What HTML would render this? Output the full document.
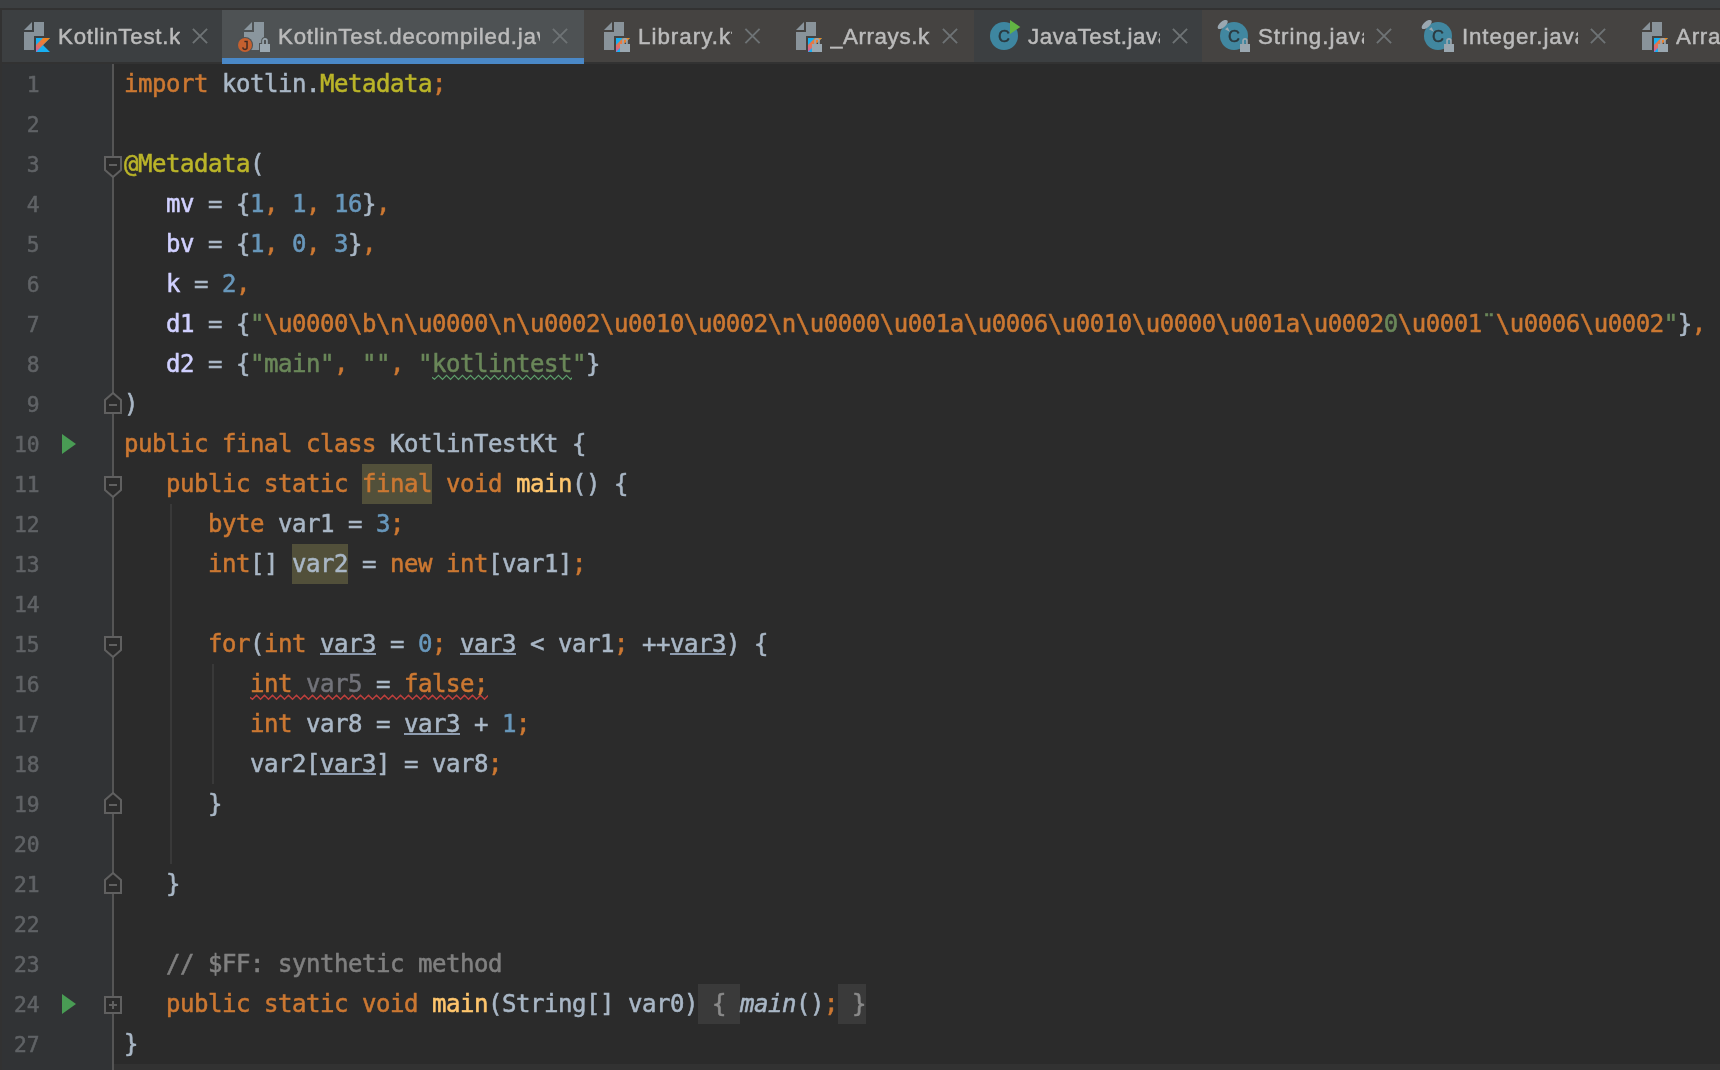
<!DOCTYPE html>
<html lang="en"><head><meta charset="utf-8"><title>KotlinTest.decompiled.java</title>
<style>
*{box-sizing:border-box}
html,body{margin:0;padding:0;overflow:hidden}
body{width:1720px;height:1070px;overflow:hidden;background:#2b2b2b;position:relative;font-family:"Liberation Sans",sans-serif}
#top{position:absolute;left:0;top:0;width:1720px;height:8px;background:#3c3f41}
#topline{position:absolute;left:0;top:8px;width:1720px;height:2px;background:#323232}
#tabs{position:absolute;left:0;top:0;width:1720px;height:64px}
.tb{position:absolute;top:10px;height:52px}
.sel{background:#4e5254;height:54px;border-bottom:6px solid #4a88c7}
#tabline{position:absolute;left:0;top:62px;width:1720px;height:2px;background:#323232}
#leftedge{position:absolute;left:0;top:8px;width:2px;height:1062px;background:#323232}
#icons{position:absolute;left:0;top:0;will-change:transform}
.tt{position:absolute;top:10.5px;height:52px;line-height:52px;font-size:22.3px;letter-spacing:0.76px;-webkit-text-stroke:0.5px #bbbbbb;color:#bbbbbb;white-space:nowrap;overflow:hidden;will-change:transform}
.cl{fill:none;stroke:#6e7375;stroke-width:1.9}
#gutter{position:absolute;left:2px;top:64px;width:110px;height:1006px;background:#313335}
#gsep{position:absolute;left:112px;top:64px;width:2px;height:1006px;background:#555555}
#caret{position:absolute;left:114px;top:1064px;width:1606px;height:6px;background:#323232}
#nums{-webkit-text-stroke-width:0.5px;will-change:transform;position:absolute;left:0;top:64px;width:39.3px;text-align:right;font-family:"DejaVu Sans Mono","Liberation Mono",monospace;font-size:21.3px;letter-spacing:-0.2px;color:#606366;line-height:40px}
#nums div{height:40px;padding-top:1px}
#code{-webkit-text-stroke-width:0.55px;position:absolute;left:124px;top:64px;font-family:"DejaVu Sans Mono","Liberation Mono",monospace;font-size:24px;letter-spacing:-0.4531px;line-height:40px;color:#a9b7c6;white-space:pre;will-change:transform}
.ln{height:40px}
.k{color:#cc7832}.a{color:#bbb529}.n{color:#6897bb}.s{color:#6a8759}.an{color:#d0d0ff}.f{color:#ffc66d}.c{color:#808080}.g{color:#72737a}
.i{font-style:italic}
.w{background:#52503a;padding:6px 0 6px}
.fold{background:#3a3a3a;color:#8a8a8a;padding:6px 0 6px}
.ul{position:absolute;height:2px;background:#8e9cb0}
.wv{position:absolute;fill:none;stroke-linejoin:miter}
.fm{position:absolute;left:104px;fill:#2b2b2b;stroke:#606060;stroke-width:2}
.run{position:absolute;left:62px;fill:#499c54}
.guide{position:absolute;width:2px;background:#393939}
</style></head>
<body>
<svg width="0" height="0" style="position:absolute"><defs><linearGradient id="kg" x1="0" y1="1" x2="1" y2="0"><stop offset="0" stop-color="#c757bc"/><stop offset="0.3" stop-color="#e0725c"/><stop offset="1" stop-color="#f88909"/></linearGradient></defs></svg>
<div id="top"></div><div id="topline"></div>
<div id="tabline"></div>
<div id="tabs"><div class="tb" style="left:2px;width:220px;background:#3c3f41"></div><div class="tb" style="left:584px;width:390px;background:#454341"></div><div class="tb" style="left:974px;width:228px;background:#3c3f41"></div><div class="tb" style="left:1202px;width:518px;background:#454341"></div><div class="tb sel" style="left:222px;width:362px"></div><svg id="icons" width="1720" height="64" viewBox="0 0 1720 64"><path d="M24 30l8-8v8z" fill="#9aa7b0" fill-opacity=".8"/><path d="M34 22h10v14h-10v14h-10v-18h10z" fill="#9aa7b0" fill-opacity=".8"/><path d="M36 38h14l-7 7l7 7h-14z" fill="#18b0f2"/><path d="M43 38h7l-14 14v-7z" fill="url(#kg)"/><path d="M244 30l8-8v8z" fill="#9aa7b0" fill-opacity=".8"/><path d="M254 22h10v28h-20v-18h10z" fill="#9aa7b0" fill-opacity=".8"/><circle cx="245" cy="45" r="8.1" fill="#4e5254"/><circle cx="245" cy="45" r="7" fill="#c4602f"/><text x="245.4" y="49.7" text-anchor="middle" font-family="Liberation Sans, sans-serif" font-size="13.3" fill="#231f20" fill-opacity=".75" stroke="#231f20" stroke-opacity=".75" stroke-width=".4">J</text><path d="M263.05 45V40.8a1.95 1.95 0 0 1 3.9 0V45" fill="none" stroke="#4e5254" stroke-width="3.7"/><rect x="259" y="43" width="12" height="10" fill="#4e5254"/><path d="M263.05 45V40.8a1.95 1.95 0 0 1 3.9 0V45" fill="none" stroke="#9aa7b0" stroke-width="1.7"/><rect x="260" y="44" width="10" height="8" fill="#9aa7b0"/><path d="M604 30l8-8v8z" fill="#9aa7b0" fill-opacity=".8"/><path d="M614 22h10v14h-10v14h-10v-18h10z" fill="#9aa7b0" fill-opacity=".8"/><path d="M616 38h14l-7 7l7 7h-14z" fill="#18b0f2"/><path d="M623 38h7l-14 14v-7z" fill="url(#kg)"/><path d="M623.05 45V40.8a1.95 1.95 0 0 1 3.9 0V45" fill="none" stroke="#9aa7b0" stroke-width="1.7"/><rect x="620" y="44" width="10" height="8" fill="#9aa7b0"/><path d="M796 30l8-8v8z" fill="#9aa7b0" fill-opacity=".8"/><path d="M806 22h10v14h-10v14h-10v-18h10z" fill="#9aa7b0" fill-opacity=".8"/><path d="M808 38h14l-7 7l7 7h-14z" fill="#18b0f2"/><path d="M815 38h7l-14 14v-7z" fill="url(#kg)"/><path d="M815.05 45V40.8a1.95 1.95 0 0 1 3.9 0V45" fill="none" stroke="#9aa7b0" stroke-width="1.7"/><rect x="812" y="44" width="10" height="8" fill="#9aa7b0"/><circle cx="1004" cy="36" r="14" fill="#40b6e0" fill-opacity=".6"/><text x="1003.9" y="41.9" text-anchor="middle" font-family="Liberation Sans, sans-serif" font-size="16.5" fill="#231f20" fill-opacity=".7" stroke="#231f20" stroke-opacity=".7" stroke-width=".5">C</text><path d="M1010 20l10.3 7l-10.3 7z" fill="#62b543"/><circle cx="1234" cy="36" r="14" fill="#40b6e0" fill-opacity=".6"/><text x="1233.9" y="41.9" text-anchor="middle" font-family="Liberation Sans, sans-serif" font-size="16.5" fill="#231f20" fill-opacity=".7" stroke="#231f20" stroke-opacity=".7" stroke-width=".5">C</text><ellipse cx="1222.7" cy="24.5" rx="6.2" ry="2.9" transform="rotate(-40.7 1222.7 24.5)" fill="#9aa7b0"/><path d="M1225.0 29.3L1227.6 27.2L1229.9 31.7z" fill="#9aa7b0"/><path d="M1243.05 45V40.8a1.95 1.95 0 0 1 3.9 0V45" fill="none" stroke="#9aa7b0" stroke-width="1.7"/><rect x="1240" y="44" width="10" height="8" fill="#9aa7b0"/><circle cx="1438" cy="36" r="14" fill="#40b6e0" fill-opacity=".6"/><text x="1437.9" y="41.9" text-anchor="middle" font-family="Liberation Sans, sans-serif" font-size="16.5" fill="#231f20" fill-opacity=".7" stroke="#231f20" stroke-opacity=".7" stroke-width=".5">C</text><ellipse cx="1426.7" cy="24.5" rx="6.2" ry="2.9" transform="rotate(-40.7 1426.7 24.5)" fill="#9aa7b0"/><path d="M1429.0 29.3L1431.6 27.2L1433.9 31.7z" fill="#9aa7b0"/><path d="M1447.05 45V40.8a1.95 1.95 0 0 1 3.9 0V45" fill="none" stroke="#9aa7b0" stroke-width="1.7"/><rect x="1444" y="44" width="10" height="8" fill="#9aa7b0"/><path d="M1642 30l8-8v8z" fill="#9aa7b0" fill-opacity=".8"/><path d="M1652 22h10v14h-10v14h-10v-18h10z" fill="#9aa7b0" fill-opacity=".8"/><path d="M1654 38h14l-7 7l7 7h-14z" fill="#18b0f2"/><path d="M1661 38h7l-14 14v-7z" fill="url(#kg)"/><path d="M1661.05 45V40.8a1.95 1.95 0 0 1 3.9 0V45" fill="none" stroke="#9aa7b0" stroke-width="1.7"/><rect x="1658" y="44" width="10" height="8" fill="#9aa7b0"/><g class="cl"><path d="M192.9 28.9l14.2 14.2m0-14.2l-14.2 14.2"/><path d="M552.9 28.9l14.2 14.2m0-14.2l-14.2 14.2"/><path d="M745.4 28.9l14.2 14.2m0-14.2l-14.2 14.2"/><path d="M942.9 28.9l14.2 14.2m0-14.2l-14.2 14.2"/><path d="M1172.9 28.9l14.2 14.2m0-14.2l-14.2 14.2"/><path d="M1376.9 28.9l14.2 14.2m0-14.2l-14.2 14.2"/><path d="M1590.9 28.9l14.2 14.2m0-14.2l-14.2 14.2"/></g></svg><span class="tt" style="left:58px;width:122.0px">KotlinTest.kt</span><span class="tt" style="left:278px;width:262.0px">KotlinTest.decompiled.java</span><span class="tt" style="left:638px;width:94.3px;letter-spacing:1.03px">Library.kt</span><span class="tt" style="left:830px;width:100.0px;letter-spacing:0.62px">_Arrays.kt</span><span class="tt" style="left:1028px;width:132.0px;letter-spacing:0.59px">JavaTest.java</span><span class="tt" style="left:1258px;width:106.2px;letter-spacing:1.00px">String.java</span><span class="tt" style="left:1462px;width:116.0px;letter-spacing:0.88px">Integer.java</span><span class="tt" style="left:1676px;width:44.0px">Arrays.kt</span></div>
<div id="gutter"></div><div id="gsep"></div><div id="leftedge"></div>
<div id="caret"></div>
<div class="guide" style="left:170px;top:504px;height:360px"></div>
<div class="guide" style="left:212px;top:664px;height:120px"></div>
<div id="nums"><div>1</div><div>2</div><div>3</div><div>4</div><div>5</div><div>6</div><div>7</div><div>8</div><div>9</div><div>10</div><div>11</div><div>12</div><div>13</div><div>14</div><div>15</div><div>16</div><div>17</div><div>18</div><div>19</div><div>20</div><div>21</div><div>22</div><div>23</div><div>24</div><div>27</div></div>
<svg class="fm" style="top:156px" width="18" height="22" viewBox="0 0 18 22"><path d="M1 1H17V14L9 21L1 14Z"/><path d="M5 9H13"/></svg><svg class="fm" style="top:392px" width="18" height="22" viewBox="0 0 18 22"><path d="M1 21H17V8L9 1L1 8Z"/><path d="M5 13H13"/></svg><svg class="fm" style="top:476px" width="18" height="22" viewBox="0 0 18 22"><path d="M1 1H17V14L9 21L1 14Z"/><path d="M5 9H13"/></svg><svg class="fm" style="top:636px" width="18" height="22" viewBox="0 0 18 22"><path d="M1 1H17V14L9 21L1 14Z"/><path d="M5 9H13"/></svg><svg class="fm" style="top:792px" width="18" height="22" viewBox="0 0 18 22"><path d="M1 21H17V8L9 1L1 8Z"/><path d="M5 13H13"/></svg><svg class="fm" style="top:872px" width="18" height="22" viewBox="0 0 18 22"><path d="M1 21H17V8L9 1L1 8Z"/><path d="M5 13H13"/></svg><svg class="fm" style="top:996px" width="18" height="18" viewBox="0 0 18 18"><path d="M1 1H17V17H1Z"/><path d="M5 9H13M9 5V13"/></svg><svg class="run" style="top:434px" width="14" height="20" viewBox="0 0 14 20"><path d="M0 0L14 10L0 20Z"/></svg><svg class="run" style="top:994px" width="14" height="20" viewBox="0 0 14 20"><path d="M0 0L14 10L0 20Z"/></svg>
<svg class="wv" style="left:432px;top:373px" width="140" height="10" viewBox="0 0 140 10"><path d="M0.0 4.3L2.5 6.3L6.5 2.3L10.5 6.3L14.5 2.3L18.5 6.3L22.5 2.3L26.5 6.3L30.5 2.3L34.5 6.3L38.5 2.3L42.5 6.3L46.5 2.3L50.5 6.3L54.5 2.3L58.5 6.3L62.5 2.3L66.5 6.3L70.5 2.3L74.5 6.3L78.5 2.3L82.5 6.3L86.5 2.3L90.5 6.3L94.5 2.3L98.5 6.3L102.5 2.3L106.5 6.3L110.5 2.3L114.5 6.3L118.5 2.3L122.5 6.3L126.5 2.3L130.5 6.3L134.5 2.3L138.5 6.3L142.5 2.3" stroke="#5d9f6b" stroke-width="1.2"/></svg><div class="ul" style="left:320px;top:653px;width:56px"></div><div class="ul" style="left:460px;top:653px;width:56px"></div><div class="ul" style="left:670px;top:653px;width:56px"></div><svg class="wv" style="left:250px;top:693px" width="238" height="10" viewBox="0 0 238 10"><path d="M0.0 4.3L2.5 6.3L6.5 2.3L10.5 6.3L14.5 2.3L18.5 6.3L22.5 2.3L26.5 6.3L30.5 2.3L34.5 6.3L38.5 2.3L42.5 6.3L46.5 2.3L50.5 6.3L54.5 2.3L58.5 6.3L62.5 2.3L66.5 6.3L70.5 2.3L74.5 6.3L78.5 2.3L82.5 6.3L86.5 2.3L90.5 6.3L94.5 2.3L98.5 6.3L102.5 2.3L106.5 6.3L110.5 2.3L114.5 6.3L118.5 2.3L122.5 6.3L126.5 2.3L130.5 6.3L134.5 2.3L138.5 6.3L142.5 2.3L146.5 6.3L150.5 2.3L154.5 6.3L158.5 2.3L162.5 6.3L166.5 2.3L170.5 6.3L174.5 2.3L178.5 6.3L182.5 2.3L186.5 6.3L190.5 2.3L194.5 6.3L198.5 2.3L202.5 6.3L206.5 2.3L210.5 6.3L214.5 2.3L218.5 6.3L222.5 2.3L226.5 6.3L230.5 2.3L234.5 6.3L238.5 2.3" stroke="#bc3f3c" stroke-width="1.5"/></svg><div class="ul" style="left:404px;top:733px;width:56px"></div><div class="ul" style="left:320px;top:773px;width:56px"></div>
<div id="code"><div class="ln"><span class="k">import </span>kotlin.<span class="a">Metadata</span><span class="k">;</span></div><div class="ln"></div><div class="ln"><span class="a">@Metadata</span>(</div><div class="ln">   <span class="an">mv</span> = {<span class="n">1</span><span class="k">,</span> <span class="n">1</span><span class="k">,</span> <span class="n">16</span>}<span class="k">,</span></div><div class="ln">   <span class="an">bv</span> = {<span class="n">1</span><span class="k">,</span> <span class="n">0</span><span class="k">,</span> <span class="n">3</span>}<span class="k">,</span></div><div class="ln">   <span class="an">k</span> = <span class="n">2</span><span class="k">,</span></div><div class="ln">   <span class="an">d1</span> = {<span class="s">"</span><span class="k">\u0000\b\n\u0000\n\u0002\u0010\u0002\n\u0000\u001a\u0006\u0010\u0000\u001a\u0002</span><span class="s">0</span><span class="k">\u0001</span><span class="s">¨</span><span class="k">\u0006\u0002</span><span class="s">"</span>}<span class="k">,</span></div><div class="ln">   <span class="an">d2</span> = {<span class="s">"main"</span><span class="k">,</span> <span class="s">""</span><span class="k">,</span> <span class="s">"</span><span class="s">kotlintest</span><span class="s">"</span>}</div><div class="ln">)</div><div class="ln"><span class="k">public final class </span>KotlinTestKt {</div><div class="ln">   <span class="k">public static </span><span class="k w">final</span><span class="k"> void </span><span class="f">main</span>() {</div><div class="ln">      <span class="k">byte </span>var1 = <span class="n">3</span><span class="k">;</span></div><div class="ln">      <span class="k">int</span>[] <span class="d w">var2</span> = <span class="k">new int</span>[var1]<span class="k">;</span></div><div class="ln"></div><div class="ln">      <span class="k">for</span>(<span class="k">int </span>var3 = <span class="n">0</span><span class="k">; </span>var3 &lt; var1<span class="k">; </span>++var3) {</div><div class="ln">         <span class="k">int </span><span class="g">var5</span> = <span class="k">false;</span></div><div class="ln">         <span class="k">int </span>var8 = var3 + <span class="n">1</span><span class="k">;</span></div><div class="ln">         var2[var3] = var8<span class="k">;</span></div><div class="ln">      }</div><div class="ln"></div><div class="ln">   }</div><div class="ln"></div><div class="ln">   <span class="c">// $FF: synthetic method</span></div><div class="ln">   <span class="k">public static void </span><span class="f">main</span>(String[] var0)<span class="fold"> { </span><span class="d i">main</span>()<span class="k">;</span><span class="fold"> }</span></div><div class="ln">}</div></div>
</body></html>
